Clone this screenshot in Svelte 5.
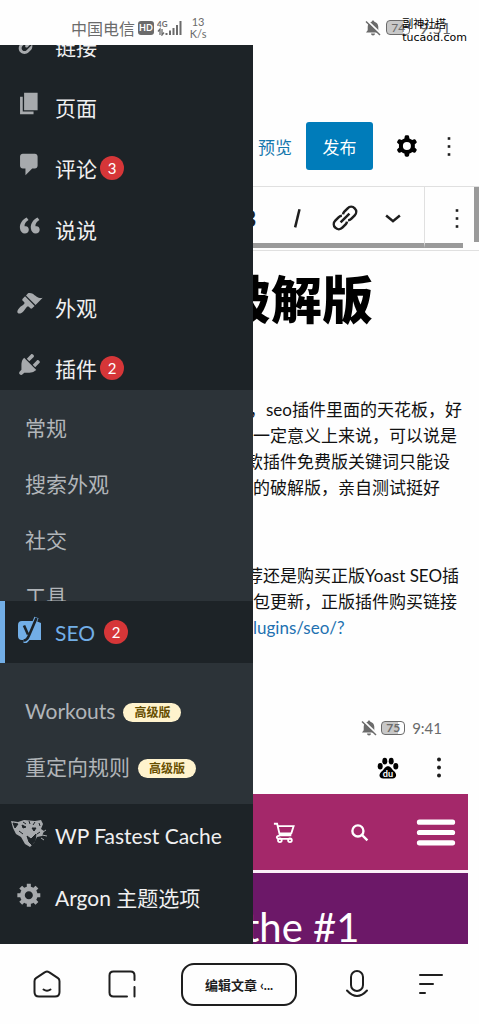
<script lang="ts">
  interface MenuItem {
    label: string;
    icon: string;
    count?: number;
    spaced?: boolean;
  }

  const icons: Record<string, string> = {
    links:
      "M17.74 2.76c1.68 1.69 1.68 4.41 0 6.1l-1.53 1.52c-1.12 1.12-2.7 1.47-4.14 1.09l2.62-2.61.76-.77.76-.76c.84-.84.84-2.2 0-3.04-.84-.85-2.2-.85-3.04 0l-.77.76-3.38 3.38c-.37-1.44-.02-3.02 1.1-4.14l1.52-1.53c1.69-1.68 4.42-1.68 6.1 0zM8.59 13.43l5.34-5.34c.42-.42.42-1.1 0-1.52-.44-.43-1.13-.39-1.53 0l-5.33 5.34c-.42.42-.42 1.1 0 1.52.44.43 1.13.39 1.52 0zm-.76 2.29l4.14-4.15c.38 1.44.03 3.02-1.09 4.14l-1.52 1.53c-1.69 1.68-4.41 1.68-6.1 0-1.68-1.68-1.68-4.42 0-6.1l1.53-1.52c1.12-1.12 2.7-1.47 4.14-1.1l-4.14 4.15c-.85.84-.85 2.2 0 3.05.84.84 2.2.84 3.04 0z",
    page: "M6 15V2h10v13H6zm-1 1h8v2H3V5h2v11z",
    comments:
      "M5 2h9c1.1 0 2 .9 2 2v7c0 1.1-.9 2-2 2h-2l-5 5v-5H5c-1.1 0-2-.9-2-2V4c0-1.1.9-2 2-2z",
    quote:
      "M9.49 13.22c0-.74-.2-1.38-.61-1.9-.62-.78-1.83-.88-2.53-.72-.29-1.65 1.11-3.75 2.92-4.65L7.88 4c-2.73 1.3-5.42 4.28-4.96 8.05C3.21 14.43 4.59 16 6.54 16c.85 0 1.56-.25 2.12-.75s.83-1.18.83-2.03zm8.05 0c0-.74-.2-1.38-.61-1.9-.63-.78-1.83-.88-2.53-.72-.29-1.65 1.11-3.75 2.92-4.65L15.93 4c-2.73 1.3-5.41 4.28-4.95 8.05.29 2.38 1.66 3.95 3.61 3.95.85 0 1.56-.25 2.12-.75s.83-1.18.83-2.03z",
    appearance:
      "M14.48 11.06L7.41 3.99l1.5-1.5c.5-.56 2.3-.47 3.51.32 1.21.8 1.43 1.28 2.91 2.1 1.18.64 2.45 1.26 4.45.85zm-.71.71L6.7 4.7 4.93 6.47c-.39.39-.39 1.02 0 1.41l1.06 1.06c.39.39.39 1.03 0 1.42-.6.6-1.43 1.11-2.21 1.69-.35.26-.7.53-1.01.84C1.43 14.23.4 16.08 1.4 17.07c.99 1 2.84-.03 4.18-1.36.31-.31.58-.66.85-1.02.57-.78 1.08-1.61 1.69-2.21.39-.39 1.02-.39 1.41 0l1.06 1.06c.39.39 1.02.39 1.41 0z",
    plugins:
      "M13.11 4.36L9.87 7.6 8 5.73l3.24-3.24c.35-.34 1.05-.2 1.56.32.52.51.66 1.21.31 1.55zm-8 1.77l.91-1.12 9.01 9.01-1.19.84c-.71.71-2.63 1.16-3.82 1.16H6.14L4.9 17.26c-.59.59-1.54.59-2.12 0-.59-.58-.59-1.53 0-2.12l1.24-1.24v-3.88c0-1.13.4-3.19 1.09-3.89zm7.26 3.97l3.24-3.24c.34-.35 1.04-.21 1.55.31.52.51.66 1.21.31 1.55l-3.24 3.25z",
    generic:
      "M18 12h-2.18c-.17.7-.44 1.35-.81 1.93l1.54 1.54-2.1 2.1-1.54-1.54c-.58.36-1.23.63-1.91.79V19H8v-2.18c-.68-.16-1.33-.43-1.91-.79l-1.54 1.54-2.12-2.12 1.54-1.54c-.36-.58-.63-1.23-.79-1.91H1V9.03h2.17c.16-.7.44-1.35.8-1.94L2.43 5.55l2.1-2.1 1.54 1.54c.58-.37 1.24-.64 1.93-.81V2h3v2.18c.68.16 1.33.43 1.91.79l1.54-1.54 2.12 2.12-1.54 1.54c.36.59.64 1.24.8 1.94H18V12zm-8.5 1.5c1.66 0 3-1.34 3-3s-1.34-3-3-3-3 1.34-3 3 1.34 3 3 3z",
  };

  const menu: MenuItem[] = [
    { label: "链接", icon: "links" },
    { label: "页面", icon: "page" },
    { label: "评论", icon: "comments", count: 3 },
    { label: "说说", icon: "quote" },
    { label: "外观", icon: "appearance", spaced: true },
    { label: "插件", icon: "plugins", count: 2 },
  ];

  const seoPages = ["常规", "搜索外观", "社交", "工具"];
  const premiumPages = ["Workouts", "重定向规则"];

  const paragraphs = [
    [
      { text: "，seo插件里面的天花板，好", indent: 3 },
      { text: "一定意义上来说，可以说是", indent: 7 },
      { text: "款插件免费版关键词只能设", indent: 0 },
      { text: "的破解版，亲自测试挺好", indent: 7 },
    ],
    [
      { text: "荐还是购买正版Yoast SEO插", indent: 0 },
      { text: "包更新，正版插件购买链接", indent: 7 },
      { text: "lugins/seo/?", indent: 7, link: true },
    ],
  ];
</script>

{#snippet dashicon(name: string)}
  <svg class="menu__icon" viewBox="0 0 20 20" aria-hidden="true">
    <path d={icons[name]} />
  </svg>
{/snippet}

{#snippet dots(round: boolean)}
  <svg class="dots" viewBox="0 0 12 24" aria-hidden="true">
    {#each [4, 12, 20] as y}
      {#if round}
        <circle cx="6" cy={y} r="2" />
      {:else}
        <rect x="4.7" y={y - 1.3} width="2.600" height="2.600" />
      {/if}
    {/each}
  </svg>
{/snippet}

{#snippet muted()}
  <svg class="muted" viewBox="0 0 16 16" aria-hidden="true">
    <path d="M8 .5a1.300 1.300 0 0 1 1.300 1.300c2.400.5 4 2.400 4 5v3.500l1.700 2.200H1l1.700-2.200V6.800c0-2.600 1.600-4.500 4-5A1.300 1.300 0 0 1 8 .5zM6 13.500h4a2 2 0 0 1-4 0z" />
    <path d="M2 .5l14 13.500" stroke="#fefefe" stroke-width="2" />
    <path d="M1 1.500l14 13.500" stroke="currentColor" stroke-width="1.500" />
  </svg>
{/snippet}

<div class="screen">
  <header class="status">
    <div class="status__side">
      <span class="carrier">中国电信</span>
      <span class="hd">HD</span>
      <svg class="signal" viewBox="0 0 25 16" aria-hidden="true">
        <text x="0" y="7" font-size="8" font-weight="700">4G</text>
        <path d="M3 15V9L1 11.500M5 9v6l2-2.500" fill="none" stroke="currentColor" stroke-width="1.300" />
        <path d="M8.500 13h2v2h-2zM12 10.500h2V15h-2zM15.500 8h2v7h-2zM19 5h2v10h-2zM22.500 1h2v14h-2z" />
      </svg>
      <span class="speed">13<br />K/s</span>
    </div>
    <div class="status__side status__side--end">
      {@render muted()}
      <span class="battery">74</span>
      <span class="clock">9:51</span>
      <span class="watermark">副神社搭<br />tucaod.com</span>
    </div>
  </header>

  <div class="browser">
    <nav class="sidebar" aria-label="WordPress">
      <div class="menu">
        {#each menu as item}
          <a class="menu__item" class:menu__item--spaced={item.spaced} href="#{item.icon}">
            {@render dashicon(item.icon)}
            {item.label}
            {#if item.count}<span class="count">{item.count}</span>{/if}
          </a>
        {/each}
      </div>

      <div class="submenu submenu--cut">
        {#each seoPages as page}
          <a class="submenu__item" href="#seo">{page}</a>
        {/each}
      </div>

      <a class="menu__item menu__item--tall menu__item--current" href="#seo">
        <svg class="menu__icon" viewBox="0 0 27 27" aria-hidden="true">
          <path d="M6 5h14l5 2v17H10l-2 2v-2H6a4 4 0 0 1-4-4V9a4 4 0 0 1 4-4z" />
          <path d="M20.500 1.500l-7.500 18q-2 6-5.500 6" fill="none" stroke="#72aee6" stroke-width="4.500" />
          <path d="M8 9.500l4 9M20.500 2l-7.500 17.500q-2 5-5.500 5" fill="none" stroke="#1d2327" stroke-width="2.600" />
        </svg>
        SEO
        <span class="count count--wide">2</span>
      </a>

      <div class="submenu submenu--premium">
        {#each premiumPages as page}
          <a class="submenu__item" href="#seo">{page}<span class="premium">高级版</span></a>
        {/each}
      </div>

      <a class="menu__item menu__item--tall" href="#cache">
        <svg class="menu__icon menu__icon--tiger" viewBox="0 0 38 28" aria-hidden="true">
          <path d="M1 2l7 1 6-2 11 1 6-1 2 4-2 5 3 2-2 5-5 1-3 6-4 4-5-3-4-7-5-3-3-6z" />
          <path d="M3 4l5 1-3 4zM12 6l4 2-3 1zM13 3l3 2M19 2l1 3M25 3l-2 3M9 12l4 3M22 9h4l-2 3zM17 17l4 3 5-5-1 7-3 4-3-3zM29 4l1 3M30 13l-3 2" fill="#1d2327" stroke="#1d2327" />
          <path d="M33 13l3-2M32 16l5 1M31 19l3 2" fill="none" stroke="currentColor" />
        </svg>
        WP Fastest Cache
      </a>
      <a class="menu__item menu__item--tall" href="#argon">
        {@render dashicon("generic")}
        Argon 主题选项
      </a>
    </nav>

    <main class="editor">
      <div class="actions">
        <button class="preview" type="button">预览</button>
        <button class="publish" type="button">发布</button>
        <button class="icon-button icon-button--cog" type="button" aria-label="设置">
          <svg class="cog" viewBox="0 0 24 24" aria-hidden="true">
            <path fill-rule="evenodd" d="M10.289 4.836A1 1 0 0111.275 4h1.306a1 1 0 01.987.836l.244 1.466c.787.26 1.503.679 2.108 1.218l1.393-.522a1 1 0 011.216.437l.653 1.130a1 1 0 01-.23 1.273l-1.148.944a6.025 6.025 0 010 2.435l1.149.946a1 1 0 01.23 1.272l-.653 1.130a1 1 0 01-1.216.437l-1.394-.522c-.605.54-1.320.958-2.108 1.218l-.244 1.466a1 1 0 01-.987.836h-1.306a1 1 0 01-.986-.836l-.244-1.466a5.995 5.995 0 01-2.108-1.218l-1.394.522a1 1 0 01-1.217-.436l-.653-1.131a1 1 0 01.23-1.272l1.149-.946a6.026 6.026 0 010-2.435l-1.148-.944a1 1 0 01-.23-1.272l.653-1.131a1 1 0 011.217-.437l1.393.522a5.994 5.994 0 012.108-1.218l.244-1.466zM14.929 12a3 3 0 11-6 0 3 3 0 016 0z" />
          </svg>
        </button>
        <button class="icon-button" type="button" aria-label="选项">{@render dots(false)}</button>
      </div>

      <div class="toolbar">
        <div class="toolbar__tools">
          <button class="tool tool--bold" type="button">B</button>
          <button class="tool" type="button" aria-label="斜体">
            <svg viewBox="0 0 24 24" aria-hidden="true"><path d="M14 5l-3.500 14.500" /></svg>
          </button>
          <button class="tool" type="button" aria-label="链接">
            <svg viewBox="0 0 24 24" aria-hidden="true">
              <g transform="rotate(-45 12 12)">
                <path d="M11 15.200q-1 .8-2 .8H5a4 4 0 0 1 0-8h4q1.500 0 2.500 1M13 8.800q1-.8 2-.8h4a4 4 0 0 1 0 8h-4q-1.500 0-2.500-1M7 12h10" />
              </g>
            </svg>
          </button>
          <button class="tool" type="button" aria-label="更多">
            <svg viewBox="0 0 24 24" aria-hidden="true"><path d="M6.500 10l5.500 4.500 5.500-4.500" /></svg>
          </button>
        </div>
        <button class="toolbar__more" type="button" aria-label="选项">{@render dots(false)}</button>
        <span class="page-scroll"></span>
      </div>

      <article class="post">
        <h1 class="post__title">破解版</h1>
        {#each paragraphs as lines}
          <p class="post__text">
            {#each lines as line}
              <span class="post__line" style="padding-left: {line.indent}px">
                {#if line.link}<a href="#seo">{line.text}</a>{:else}{line.text}{/if}
              </span>
            {/each}
          </p>
        {/each}

        <figure class="shot">
          <div class="shot__status">
            {@render muted()}
            <span class="battery battery--small">75</span>
            <span>9:41</span>
          </div>
          <div class="shot__bar">
            <svg class="paw" viewBox="0 0 24 24" aria-label="du">
              <ellipse cx="3.500" cy="10" rx="2.700" ry="3.500" />
              <ellipse cx="8.500" cy="4.500" rx="2.700" ry="3.800" />
              <ellipse cx="15.500" cy="4.500" rx="2.700" ry="3.800" />
              <ellipse cx="20.500" cy="10" rx="2.700" ry="3.500" />
              <path d="M12 10c3 0 4 3 6 5 4 3 4 8-1 8.500H7C1 23 2 18 6 15c2-2 3-5 6-5z" />
              <text x="12" y="21.500" font-size="10" font-weight="700" text-anchor="middle" fill="#fff">du</text>
            </svg>
            {@render dots(true)}
          </div>
          <div class="shot__menu">
            <svg class="shot__icon" viewBox="0 0 24 24" aria-hidden="true">
              <path d="M1 3h3.500l3 12.500H20M5.500 5.500h17L20 13.500H7.500M7.500 16c-5 0-4 4 0 3.500h12" />
              <circle cx="7.500" cy="21" r="2" /><circle cx="18.500" cy="21" r="2" />
            </svg>
            <svg class="shot__icon shot__icon--search" viewBox="0 0 24 24" aria-hidden="true">
              <circle cx="10" cy="10" r="7" /><path d="M15 15l7 7" />
            </svg>
            <svg class="burger" viewBox="0 0 38 28" aria-hidden="true">
              <path d="M3 4h32M3 14h32M3 24h32" />
            </svg>
          </div>
          <div class="shot__hero">the #1</div>
        </figure>
      </article>
    </main>
  </div>

  <nav class="tabs" aria-label="浏览器">
    <button class="tab" type="button" aria-label="主页">
      <svg viewBox="0 0 30 30" aria-hidden="true">
        <path d="M15 2.500q1 0 2 .7l9 6q1.500 1 1.500 3V23q0 4.500-4.500 4.500H7q-4.500 0-4.500-4.500V12.200q0-2 1.500-3l9-6q1-.7 2-.7zM11.500 20.500q3.500 2.500 7 0" />
      </svg>
    </button>
    <button class="tab" type="button" aria-label="侧栏">
      <svg viewBox="0 0 30 30" aria-hidden="true">
        <path d="M20 27.500H6.500q-4 0-4-4v-17q0-4 4-4h17q4 0 4 4V11M27.500 18v9.500" />
      </svg>
    </button>
    <button class="tab tab--title" type="button">编辑文章 ‹...</button>
    <button class="tab" type="button" aria-label="语音">
      <svg viewBox="0 0 30 30" aria-hidden="true">
        <rect x="9" y="2" width="12" height="20" rx="6" />
        <path d="M5 21.500q10 11 20 0" />
      </svg>
    </button>
    <button class="tab" type="button" aria-label="菜单">
      <svg viewBox="0 0 30 30" aria-hidden="true">
        <path d="M4 6h22M4 15h13M4 24h5" />
      </svg>
    </button>
  </nav>
</div>

<style>
  :global(body) {
    margin: 0;
    background: #fefefe;
  }

  .screen {
    display: flex;
    flex-direction: column;
    min-height: 100vh;
    color: #1e1e1e;
    font-family: Lato, "Noto Sans CJK SC", sans-serif;
  }

  button {
    padding: 0;
    border: 0;
    background: none;
    color: inherit;
    font: inherit;
  }

  a {
    color: inherit;
    text-decoration: none;
  }

  .status {
    display: flex;
    justify-content: space-between;
    box-sizing: border-box;
    height: 45px;
    padding: 10px 28px 0 71px;
    color: #6b6b6b;
  }

  .status__side {
    display: flex;
    align-items: center;
    gap: 3px;
    position: relative;
  }

  .status__side--end {
    gap: 5px;
  }

  .carrier {
    font-size: 16px;
  }

  .hd {
    padding: 0 1px;
    border-radius: 3px;
    background: #6b6b6b;
    color: #fefefe;
    font-size: 9px;
    font-weight: 700;
    line-height: 14px;
  }

  .signal {
    width: 25px;
    height: 16px;
    fill: currentColor;
  }

  .speed {
    margin-left: 5px;
    font-size: 11px;
    line-height: 12px;
    text-align: center;
  }

  .muted {
    width: 16px;
    height: 16px;
    fill: currentColor;
  }

  .battery {
    padding: 0 4px;
    border: 1px solid currentColor;
    border-radius: 4px;
    background: linear-gradient(90deg, #c8c8c8 74%, #fefefe 74%);
    font-size: 12px;
    line-height: 13px;
  }

  .clock {
    padding-left: 4px;
    font-size: 16px;
  }

  .watermark {
    position: absolute;
    top: 8px;
    left: 37px;
    color: #000;
    font-family: "DejaVu Sans", "Noto Sans CJK SC", sans-serif;
    font-size: 11px;
    line-height: 13px;
  }

  .browser {
    display: grid;
    grid-template-columns: 253px minmax(0, 1fr);
    overflow: hidden;
  }

  .sidebar {
    display: flex;
    flex-direction: column;
    padding-bottom: 16px;
    background: #1d2327;
    color: #f0f0f1;
    font-size: 21px;
  }

  .menu {
    display: flex;
    flex-direction: column;
    height: 345px;
    overflow: hidden;
  }

  .menu__item {
    display: flex;
    flex-shrink: 0;
    align-items: center;
    box-sizing: border-box;
    height: 61px;
    padding-left: 16px;
    white-space: nowrap;
  }

  .menu__item:first-child {
    margin-top: -30px;
  }

  .menu__item--spaced {
    margin-top: 17px;
  }

  .menu__item--tall {
    height: 62px;
  }

  .menu__item--current {
    padding-left: 11px;
    border-left: 5px solid #72aee6;
    color: #72aee6;
  }

  .menu__icon {
    width: 27px;
    height: 27px;
    margin: 0 12px 6px 0;
    fill: #a7aaad;
  }

  .menu__item--current .menu__icon {
    fill: #72aee6;
  }

  .menu__icon--tiger {
    width: 38px;
    height: 28px;
    margin: 0 7px 4px -6px;
    color: #a7aaad;
  }

  .count {
    width: 24px;
    margin-left: 3px;
    border-radius: 12px;
    background: #d63638;
    color: #fff;
    font-size: 15px;
    line-height: 24px;
    text-align: center;
  }

  .count--wide {
    margin-left: 9px;
  }

  .submenu {
    display: flex;
    flex-direction: column;
    box-sizing: border-box;
    overflow: hidden;
    background: #2c3338;
    color: #b1b5b9;
  }

  .submenu--cut {
    height: 211px;
    padding-top: 9px;
  }

  .submenu--premium {
    padding: 19px 0 10px;
  }

  .submenu__item {
    display: flex;
    flex-shrink: 0;
    align-items: center;
    height: 56px;
    padding-left: 25px;
  }

  .premium {
    margin: 4px 0 0 8px;
    padding: 0 11px;
    border-radius: 10px;
    background: #fff3cd;
    color: #674e00;
    font-size: 12px;
    font-weight: 700;
    line-height: 19px;
  }

  .editor {
    overflow: hidden;
    background: #fefefe;
  }

  .actions {
    display: flex;
    align-items: center;
    justify-content: flex-end;
    box-sizing: border-box;
    height: 142px;
    padding: 61px 24px 0 0;
    border-bottom: 1px solid #e0e0e0;
    font-size: 17px;
  }

  .preview {
    margin-right: 14px;
    color: #1678ad;
  }

  .publish {
    width: 67px;
    height: 48px;
    margin-right: 18px;
    border-radius: 3px;
    background: #007cba;
    color: #fff;
  }

  .icon-button {
    display: flex;
  }

  .icon-button--cog {
    margin-right: 20px;
  }

  .cog {
    width: 32px;
    height: 32px;
  }

  .dots {
    width: 12px;
    height: 25px;
    fill: #1e1e1e;
  }

  .toolbar {
    display: flex;
    height: 63px;
    border-bottom: 1px solid #e0e0e0;
  }

  .toolbar__tools,
  .toolbar__more {
    display: flex;
    align-items: center;
    justify-content: flex-end;
    margin-bottom: 2px;
    padding-top: 6px;
    border-bottom: 5px solid #9a9a9a;
  }

  .toolbar__tools {
    flex: 1;
    gap: 18px;
    min-width: 0;
    padding-right: 16px;
    overflow: hidden;
    border-right: 1px solid #e0e0e0;
  }

  .toolbar__more {
    width: 38px;
  }

  .tool {
    flex-shrink: 0;
    width: 30px;
    height: 30px;
  }

  .tool svg {
    display: block;
    width: 30px;
    height: 30px;
    fill: none;
    stroke: #1e1e1e;
    stroke-width: 2;
  }

  .tool--bold {
    font-size: 22px;
    font-weight: 700;
  }

  .page-scroll {
    width: 5px;
    height: 55px;
    margin-left: 11px;
    background: #9a9a9a;
  }

  .post__title {
    margin: 11px 0 59px -33px;
    color: #000;
    font-size: 51px;
    font-weight: 900;
    line-height: 76px;
    white-space: nowrap;
  }

  .post__text {
    margin: 0 0 62px -7px;
    color: #111;
    font-size: 17px;
    line-height: 26px;
    white-space: nowrap;
  }

  .post__line {
    display: block;
  }

  .post__line a {
    color: #2271b1;
  }

  .shot {
    height: 229px;
    margin: 74px 11px 0 0;
    overflow: hidden;
  }

  .shot__status,
  .shot__bar {
    display: flex;
    align-items: center;
    justify-content: flex-end;
  }

  .shot__status {
    gap: 4px;
    height: 26px;
    padding-right: 26px;
    color: #6b6b6b;
    font-size: 15px;
  }

  .battery--small {
    margin-right: 3px;
    font-weight: 700;
    line-height: 12px;
  }

  .shot__bar {
    gap: 34px;
    height: 53px;
    padding-right: 23px;
  }

  .paw {
    width: 22px;
    height: 22px;
  }

  .shot__menu {
    display: flex;
    align-items: center;
    justify-content: space-between;
    height: 76px;
    padding: 0 12px 0 20px;
    border-bottom: 3px solid #fbeef8;
    background: #a4286a;
  }

  .shot__icon {
    width: 22px;
    height: 22px;
    fill: none;
    stroke: #fff;
    stroke-width: 2;
  }

  .shot__icon--search {
    width: 19px;
    height: 19px;
    margin-left: 8px;
    stroke-width: 3;
  }

  .burger {
    width: 40px;
    height: 29px;
    fill: none;
    stroke: #fff;
    stroke-width: 5;
    stroke-linecap: round;
  }

  .shot__hero {
    height: 73px;
    background: #6c1868;
    color: #fff;
    font-size: 40px;
    line-height: 108px;
    text-indent: -8px;
  }

  .tabs {
    display: flex;
    align-items: center;
    justify-content: space-between;
    height: 80px;
    padding: 0 33px 0 32px;
  }

  .tab svg {
    display: block;
    width: 30px;
    height: 30px;
    fill: none;
    stroke: #1e1e1e;
    stroke-width: 2;
    stroke-linecap: round;
  }

  .tab--title {
    width: 116px;
    height: 43px;
    border: 2px solid #1e1e1e;
    border-radius: 13px;
    font-size: 13px;
    font-weight: 700;
  }
</style>
